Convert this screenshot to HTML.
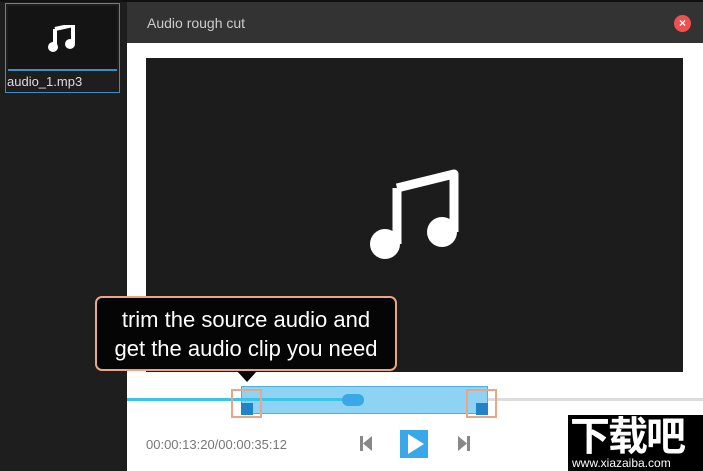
<!DOCTYPE html>
<html><head><style>
body{margin:0;width:703px;height:471px;position:relative;overflow:hidden;background:#fff;font-family:"Liberation Sans",sans-serif}
div{position:absolute;box-sizing:border-box}
</style></head><body>
<div style="left:0;top:0;width:127px;height:471px;background:#1e1e1e"></div>
<div style="left:0;top:0;width:703px;height:2px;background:#111"></div>
<div style="left:5px;top:3px;width:115px;height:90px;border:1px solid #3a8fc0"></div>
<div style="left:8px;top:6px;width:109px;height:63px;background:#141414"></div>
<div style="left:8px;top:69px;width:109px;height:2px;background:#3a8fc0"></div>
<svg style="position:absolute;left:48px;top:25px" width="30" height="28" viewBox="0 0 30 28"><path d="M7 4L25 0V18" stroke="#fff" stroke-width="4" fill="none"/><path d="M7 4V22" stroke="#fff" stroke-width="4"/><circle cx="5" cy="22" r="5" fill="#fff"/><circle cx="22" cy="19" r="5" fill="#fff"/></svg>
<div style="left:7px;top:74px;font-size:13px;color:#ddd">audio_1.mp3</div>
<div style="left:127px;top:2px;width:576px;height:41px;background:#333"></div>
<div style="left:147px;top:15px;font-size:14px;color:#ccc">Audio rough cut</div>
<div style="left:674px;top:15px;width:17px;height:17px;border-radius:50%;background:#f0504f;color:#fff;font-size:12px;line-height:17px;text-align:center;font-weight:bold">×</div>
<div style="left:146px;top:58px;width:537px;height:314px;background:#1c1c1c"></div>
<svg style="position:absolute;left:368px;top:168px" width="92" height="92" viewBox="0 0 92 92"><path d="M29 20L86 6V64" stroke="#fff" stroke-width="9" fill="none" stroke-linejoin="round"/><path d="M29 20V76" stroke="#fff" stroke-width="9"/><circle cx="17" cy="76" r="15" fill="#fff"/><circle cx="74" cy="64" r="15" fill="#fff"/></svg>
<div style="left:95px;top:296px;width:302px;height:75px;background:#050505;border:2px solid #e9a684;border-radius:7px;color:#fff;font-size:22px;line-height:29px;text-align:center;padding-top:7px">trim the source audio and<br>get the audio clip you need</div>
<div style="left:237px;top:371px;width:0;height:0;border-left:10px solid transparent;border-right:10px solid transparent;border-top:11px solid #050505"></div>
<div style="left:127px;top:398px;width:576px;height:3px;background:#ddd"></div>
<div style="left:127px;top:398px;width:230px;height:3px;background:#3cc3e8"></div>
<div style="left:241px;top:386px;width:247px;height:28px;background:#8fd3f4;border:1px solid #4ab0e6"></div>
<div style="left:241px;top:398px;width:116px;height:3px;background:#3cc3e8"></div>
<div style="left:342px;top:394px;width:22px;height:12px;border-radius:6px;background:#38a8e6"></div>
<div style="left:241px;top:403px;width:12px;height:12px;background:#2183c8"></div>
<div style="left:476px;top:403px;width:12px;height:12px;background:#2183c8"></div>
<div style="left:231px;top:389px;width:31px;height:29px;border:2px solid #e9a684"></div>
<div style="left:466px;top:389px;width:31px;height:29px;border:2px solid #e9a684"></div>
<div style="left:146px;top:437px;font-size:13px;color:#777">00:00:13:20/00:00:35:12</div>
<svg style="position:absolute;left:358px;top:428px" width="120" height="32"><rect x="2" y="8" width="3" height="15" fill="#888"/><path d="M14 8V23L5 15.5Z" fill="#888"/><rect x="42" y="2" width="28" height="28" fill="#3aa7e8"/><path d="M50 6V26L66 16Z" fill="#fff"/><path d="M100 8V23L109 15.5Z" fill="#888"/><rect x="109" y="8" width="3" height="15" fill="#888"/></svg>
<div style="left:568px;top:415px;width:135px;height:56px;background:#000"></div>
<div style="left:570px;top:409px;width:133px;font-size:40px;color:#fff;font-weight:bold;font-family:'Noto Sans CJK SC',sans-serif;letter-spacing:-2px;line-height:48px">下载吧</div>
<div style="left:572px;top:456px;font-size:12px;color:#fff">www.xiazaiba.com</div>
</body></html>
